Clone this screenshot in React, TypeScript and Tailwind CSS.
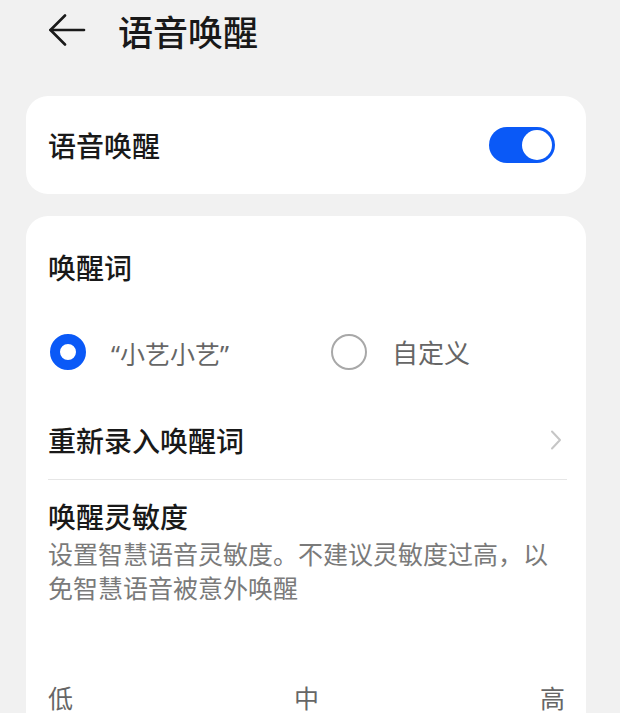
import type { ReactNode } from 'react';

const font = { fontFamily: '"Noto Sans CJK SC", "Noto Sans", sans-serif' };

function BackArrow() {
  return (
    <svg width="38" height="32" viewBox="0 0 38 32" fill="none" stroke="#1a1a1a" strokeWidth="2.6" strokeLinecap="round" strokeLinejoin="round">
      <path d="M36 16H2.5" />
      <path d="M17 1.5L2.5 16L17 30.5" />
    </svg>
  );
}

function Toggle() {
  return (
    <span className="flex h-[36px] w-[66px] items-center justify-end rounded-full bg-[#0a59f7] pr-[3px]">
      <span className="block h-[30px] w-[30px] rounded-full bg-white" />
    </span>
  );
}

function Radio({ checked }: { checked: boolean }) {
  return checked ? (
    <span className="box-border block h-[36px] w-[36px] shrink-0 rounded-full border-[10px] border-[#0a59f7] bg-white" />
  ) : (
    <span className="box-border block h-[36px] w-[36px] shrink-0 rounded-full border-2 border-[#a8a8a8] bg-white" />
  );
}

function Card({ children, className = '' }: { children: ReactNode; className?: string }) {
  return <div className={`ml-[26px] w-[560px] bg-white ${className}`}>{children}</div>;
}

export default function App() {
  return (
    <div className="flex h-[713px] w-[620px] flex-col overflow-hidden bg-[#f1f1f1] text-[#191919]" style={font}>
      <header className="flex h-[60px] shrink-0 items-center pl-[48px]">
        <BackArrow />
        <h1 className="ml-[32px] text-[35px] font-medium leading-none">语音唤醒</h1>
      </header>

      <Card className="mt-[36px] flex h-[98px] shrink-0 items-center justify-between rounded-[22px] pl-[22px] pr-[31px]">
        <span className="text-[28px] font-medium">语音唤醒</span>
        <Toggle />
      </Card>

      {/* the second card runs on past the bottom of the screen */}
      <Card className="mt-[22px] flex-1 rounded-t-[22px] pl-[22px] pr-[19px]">
        <div className="flex h-[102px] items-center text-[28px] font-medium">唤醒词</div>

        <div className="flex h-[68px] items-center text-[26px] text-[#666666]">
          <div className="flex w-[283px] items-center">
            <span className="ml-[2px] block">
              <Radio checked />
            </span>
            <span className="ml-[25px] mt-[4px] text-[25px] leading-[36px] font-['Noto_Sans','Noto_Sans_CJK_SC',sans-serif]">“小艺小艺”</span>
          </div>
          <div className="flex items-center">
            <Radio checked={false} />
            <span className="ml-[25px] leading-[36px]">自定义</span>
          </div>
        </div>

        <div className="flex h-[93px] items-center justify-between pt-[14px]">
          <span className="text-[28px] font-medium">重新录入唤醒词</span>
          <svg width="12" height="20" viewBox="0 0 12 20" fill="none" stroke="#c6c6c6" strokeWidth="2" strokeLinecap="round" strokeLinejoin="round" className="mr-[5px]">
            <path d="M2 1.5L10 10L2 18.5" />
          </svg>
        </div>

        <div className="h-px bg-[#e6e6e6]" />

        <div className="mt-[18px] text-[28px] font-medium leading-[36px]">唤醒灵敏度</div>
        <p className="mt-[2px] text-[25px] leading-[34px] text-[#7a7a7a]">
          设置智慧语音灵敏度。不建议灵敏度过高，以免智慧语音被意外唤醒
        </p>

        <div className="mt-[79px] flex justify-between pr-[2px] text-[25px] leading-[28px] text-[#666666]">
          <span>低</span>
          <span>中</span>
          <span>高</span>
        </div>
      </Card>
    </div>
  );
}
